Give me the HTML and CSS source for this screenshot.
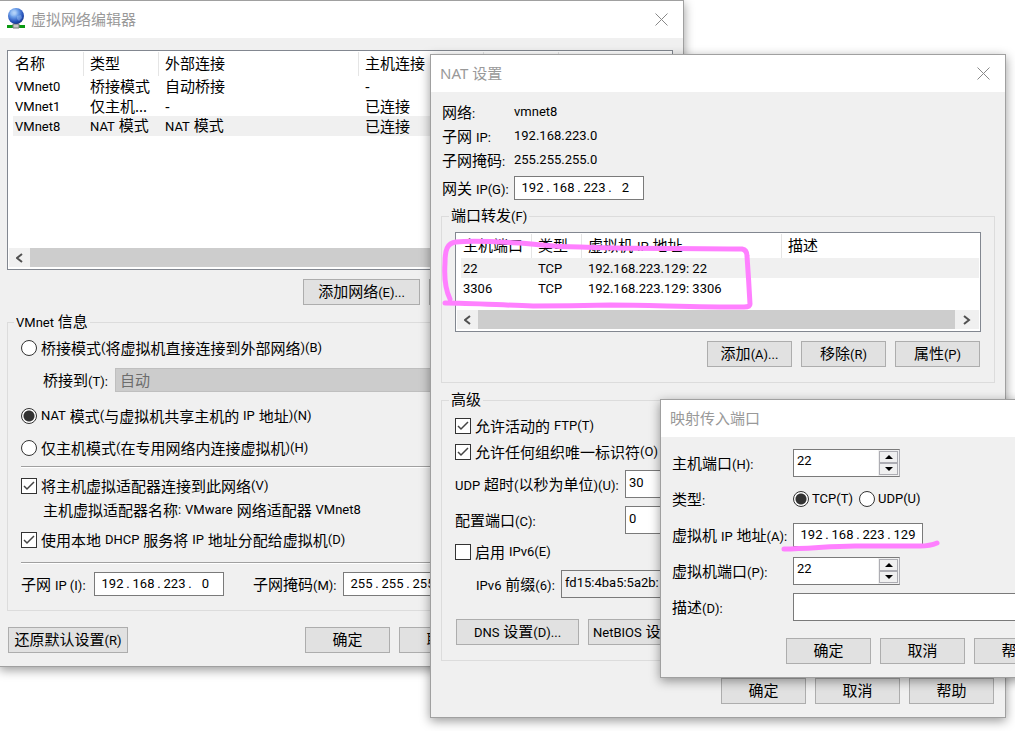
FILE: index.html
```html
<!DOCTYPE html>
<html lang="zh-CN">
<head>
<meta charset="utf-8">
<title>虚拟网络编辑器</title>
<link rel="stylesheet" href="styles.css">
</head>
<body>
<main class="desktop">

<section class="window window-editor">
  <header class="titlebar">
    <svg class="app-icon" width="20" height="22" viewBox="0 0 20 22">
      <defs><radialGradient id="globe" cx=".38" cy=".3" r=".75"><stop offset="0" stop-color="#d4e8ff"/><stop offset=".35" stop-color="#6da0ea"/><stop offset=".75" stop-color="#2450b8"/><stop offset="1" stop-color="#173480"/></radialGradient></defs>
      <path d="M8 15h4v3h-4z" fill="#777"/>
      <path d="M1 17h18v3H1z" fill="#0a9a12"/><path d="M7 16h6v4H7z" fill="#c8c8c8" stroke="#777"/>
      <circle cx="10" cy="8" r="8" fill="url(#globe)"/>
      <path d="M5 3q3-2 5 0l-1 3-3 2-2-2zM11 8l4-1 1 3-3 3-2-2z" fill="#9cc4f4" opacity=".45"/>
    </svg>
    <h1 class="title">虚拟网络编辑器</h1>
    <button class="close" type="button" aria-label="关闭"><svg width="13" height="13" viewBox="0 0 13 13"><path d="M.5.5l12 12M12.5.5l-12 12"/></svg></button>
  </header>
  <div class="editor-body">
    <div class="list networks">
      <table>
        <colgroup><col class="c-first"><col class="c-type"><col class="c-wide"><col class="c-host"><col class="c-type"><col></colgroup>
        <thead><tr><th>名称</th><th>类型</th><th>外部连接</th><th>主机连接</th><th></th><th></th></tr></thead>
        <tbody>
          <tr><td><span class="en">VMnet0</span></td><td>桥接模式</td><td>自动桥接</td><td>-</td><td></td><td></td></tr>
          <tr><td><span class="en">VMnet1</span></td><td>仅主机...</td><td>-</td><td>已连接</td><td></td><td></td></tr>
          <tr class="selected"><td><span class="en">VMnet8</span></td><td><span class="en">NAT</span> 模式</td><td><span class="en">NAT</span> 模式</td><td>已连接</td><td></td><td></td></tr>
        </tbody>
      </table>
      <div class="scrollbar">
        <button class="arrow" type="button" aria-label="向左"><svg width="8" height="10" viewBox="0 0 8 10"><path d="M6 1L1 5l5 4"/></svg></button>
        <div class="thumb"></div>
        <button class="arrow" type="button" aria-label="向右"><svg width="8" height="10" viewBox="0 0 8 10"><path d="M1 1l5 4-5 4"/></svg></button>
      </div>
    </div>
    <div class="actions network-actions">
      <button class="btn add-network" type="button">添加网络<span class="en">(E)...</span></button>
      <button class="btn add-network" type="button"></button>
      <button class="btn add-network" type="button"></button>
    </div>
    <fieldset class="group vmnet">
      <legend><span class="en">VMnet</span> 信息</legend>
      <div class="stack">
        <label class="row"><input type="radio" name="mode">桥接模式<span class="en">(</span>将虚拟机直接连接到外部网络<span class="en">)(B)</span></label>
        <div class="row indent bridge"><label for="bridge">桥接到<span class="en">(T):</span></label><select id="bridge" disabled><option>自动</option></select></div>
      </div>
      <div class="stack modes">
        <label class="row"><input type="radio" name="mode" checked><span class="en">NAT</span>&nbsp;模式<span class="en">(</span>与虚拟机共享主机的&nbsp;<span class="en">IP</span>&nbsp;地址<span class="en">)(N)</span></label>
        <label class="row"><input type="radio" name="mode">仅主机模式<span class="en">(</span>在专用网络内连接虚拟机<span class="en">)(H)</span></label>
      </div>
      <hr>
      <label class="row"><input type="checkbox" checked>将主机虚拟适配器连接到此网络<span class="en">(V)</span></label>
      <p class="row indent">主机虚拟适配器名称<span class="en">:</span>&nbsp;<span class="en">VMware</span>&nbsp;网络适配器&nbsp;<span class="en">VMnet8</span></p>
      <label class="row dhcp"><input type="checkbox" checked>使用本地&nbsp;<span class="en">DHCP</span>&nbsp;服务将&nbsp;<span class="en">IP</span>&nbsp;地址分配给虚拟机<span class="en">(D)</span></label>
      <hr>
      <div class="row subnet">
        <label class="subnet-label" for="ip1">子网&nbsp;<span class="en">IP (I):</span></label>
        <div class="ip"><input id="ip1" value="192"><i>.</i><input aria-label="2" value="168"><i>.</i><input aria-label="3" value="223"><i>.</i><input aria-label="4" value="0"></div>
        <label class="mask-label" for="mask1">子网掩码<span class="en">(M):</span></label>
        <div class="ip"><input id="mask1" value="255"><i>.</i><input aria-label="2" value="255"><i>.</i><input aria-label="3" value="255"><i>.</i><input aria-label="4" value="0"></div>
      </div>
    </fieldset>
    <div class="actions editor-actions">
      <button class="btn restore" type="button">还原默认设置<span class="en">(R)</span></button>
      <button class="btn" type="button">确定</button>
      <button class="btn" type="button">取消</button>
      <button class="btn" type="button"></button>
    </div>
  </div>
</section>

<section class="window window-nat">
  <header class="titlebar">
    <h2 class="title">NAT 设置</h2>
    <button class="close" type="button" aria-label="关闭"><svg width="13" height="13" viewBox="0 0 13 13"><path d="M.5.5l12 12M12.5.5l-12 12"/></svg></button>
  </header>
  <div class="nat-body">
    <div class="facts">
      <span>网络<span class="en">:</span></span><span class="en">vmnet8</span>
      <span>子网 <span class="en">IP:</span></span><span class="en">192.168.223.0</span>
      <span>子网掩码<span class="en">:</span></span><span class="en">255.255.255.0</span>
    </div>
    <div class="facts gateway">
      <label for="gw">网关 <span class="en">IP(G):</span></label>
      <div class="ip"><input id="gw" value="192"><i>.</i><input aria-label="2" value="168"><i>.</i><input aria-label="3" value="223"><i>.</i><input aria-label="4" value="2"></div>
    </div>
    <fieldset class="group forwarding">
      <legend>端口转发<span class="en">(F)</span></legend>
      <div class="list">
        <table>
          <colgroup><col class="c-first"><col class="c-proto"><col class="c-wide"><col></colgroup>
          <thead><tr><th>主机端口</th><th>类型</th><th>虚拟机 <span class="en">IP</span> 地址</th><th>描述</th></tr></thead>
          <tbody>
            <tr class="selected"><td><span class="en">22</span></td><td><span class="en">TCP</span></td><td><span class="en">192.168.223.129: 22</span></td><td></td></tr>
            <tr><td><span class="en">3306</span></td><td><span class="en">TCP</span></td><td><span class="en">192.168.223.129: 3306</span></td><td></td></tr>
          </tbody>
        </table>
        <div class="scrollbar">
          <button class="arrow" type="button" aria-label="向左"><svg width="8" height="10" viewBox="0 0 8 10"><path d="M6 1L1 5l5 4"/></svg></button>
          <div class="thumb"></div>
          <button class="arrow" type="button" aria-label="向右"><svg width="8" height="10" viewBox="0 0 8 10"><path d="M1 1l5 4-5 4"/></svg></button>
        </div>
      </div>
      <div class="actions forward-actions">
        <button class="btn" type="button">添加<span class="en">(A)...</span></button>
        <button class="btn" type="button">移除<span class="en">(R)</span></button>
        <button class="btn" type="button">属性<span class="en">(P)</span></button>
      </div>
    </fieldset>
    <fieldset class="group advanced">
      <legend>高级</legend>
      <label class="row"><input type="checkbox" checked>允许活动的&nbsp;<span class="en">FTP(T)</span></label>
      <label class="row oui"><input type="checkbox" checked>允许任何组织唯一标识符<span class="en">(O)</span></label>
      <div class="pair">
        <label for="udp"><span class="en">UDP</span> 超时<span class="en">(</span>以秒为单位<span class="en">)(U):</span></label><input class="field short" id="udp" value="30">
        <label for="cfg">配置端口<span class="en">(C):</span></label><input class="field short" id="cfg" value="0">
      </div>
      <label class="row ipv6"><input type="checkbox">启用&nbsp;<span class="en">IPv6(E)</span></label>
      <div class="prefix"><label for="pre"><span class="en">IPv6</span> 前缀<span class="en">(6):</span></label><input class="field" id="pre" value="fd15:4ba5:5a2b:" disabled></div>
      <div class="actions advanced-actions">
        <button class="btn" type="button"><span class="en">DNS</span> 设置<span class="en">(D)...</span></button>
        <button class="btn netbios" type="button"><span class="en">NetBIOS</span> 设置</button>
      </div>
    </fieldset>
    <div class="actions nat-actions">
      <button class="btn" type="button">确定</button>
      <button class="btn" type="button">取消</button>
      <button class="btn" type="button">帮助</button>
    </div>
  </div>
</section>

<section class="window window-map">
  <header class="titlebar"><h2 class="title">映射传入端口</h2></header>
  <div class="map-body">
    <div class="form">
      <label for="hp">主机端口<span class="en">(H):</span></label>
      <div class="spin"><input id="hp" value="22"><div class="steps"><button type="button" aria-label="增加"><svg width="8" height="4" viewBox="0 0 8 4"><path d="M0 4l4-4 4 4z"/></svg></button><button type="button" aria-label="减少"><svg width="8" height="4" viewBox="0 0 8 4"><path d="M0 0l4 4 4-4z"/></svg></button></div></div>
      <span>类型<span class="en">:</span></span>
      <div class="choices"><label class="row"><input type="radio" name="proto" checked><span class="en">TCP(T)</span></label><label class="row"><input type="radio" name="proto"><span class="en">UDP(U)</span></label></div>
      <label for="vmip">虚拟机 <span class="en">IP</span> 地址<span class="en">(A):</span></label>
      <div class="ip"><input id="vmip" value="192"><i>.</i><input aria-label="2" value="168"><i>.</i><input aria-label="3" value="223"><i>.</i><input aria-label="4" value="129"></div>
      <label for="vp">虚拟机端口<span class="en">(P):</span></label>
      <div class="spin"><input id="vp" value="22"><div class="steps"><button type="button" aria-label="增加"><svg width="8" height="4" viewBox="0 0 8 4"><path d="M0 4l4-4 4 4z"/></svg></button><button type="button" aria-label="减少"><svg width="8" height="4" viewBox="0 0 8 4"><path d="M0 0l4 4 4-4z"/></svg></button></div></div>
      <label for="desc">描述<span class="en">(D):</span></label>
      <input class="field" id="desc">
    </div>
    <div class="actions map-actions">
      <button class="btn" type="button">确定</button>
      <button class="btn" type="button">取消</button>
      <button class="btn" type="button">帮助</button>
    </div>
  </div>
</section>

<svg class="ink" width="1015" height="731" viewBox="0 0 1015 731" aria-hidden="true">
  <path d="M450 299C446 291 444 278 445 263C445 250 447 243 456 242C475 240 500 242 520 243C545 245 550 247 580 247C620 249 680 248 742 249Q747 250 747 256C748 270 749 285 750 304Q750 307 744 307C690 307 650 305 610 305C570 306 550 306 533 306C500 305 470 303 445 303"/>
  <path d="M784 549C808 549 830 546 855 546C880 546 900 546 920 546Q930 546 937 543"/>
</svg>
</main>
</body>
</html>
```

FILE: styles.css
```css
* { box-sizing: border-box; }
body {
  margin: 0;
  background: #fff;
  color: #000;
  font-family: "Noto Sans", "Noto Sans CJK SC", sans-serif;
  font-size: 15px;
  line-height: 20px;
}
button, input, select { font: inherit; color: inherit; margin: 0; }
p, h1, h2 { margin: 0; }
.en { font-family: Roboto, "Noto Sans", sans-serif; font-size: 13px; line-height: 16px; white-space: pre; }

.desktop { position: relative; min-height: 100vh; overflow: hidden; }
.window {
  position: absolute;
  background: #f0f0f0;
  border: 1px solid #a0a0a0;
  box-shadow: 0 3px 10px rgba(0, 0, 0, .4);
  white-space: nowrap;
}
.window-editor { left: -1px; top: 0; width: 685px; }
.window-nat { left: 430px; top: 54px; width: 576px; }
.window-map { left: 660px; top: 399px; width: 411px; }

.titlebar {
  display: flex;
  align-items: center;
  height: 37px;
  padding: 0 15px 1px 9px;
  background: #fff;
}
.window-editor .titlebar { padding-left: 6px; }
.app-icon { margin-right: 5px; }
.title { flex: 1; font-size: 15px; font-weight: 400; color: #999; }
.close { display: flex; padding: 0; border: 0; background: none; }
.close svg { fill: none; stroke: #888; }

/* list views */
.list {
  display: flex;
  flex-direction: column;
  padding: 1px;
  border: 1px solid #828790;
  background: #fff;
}
.list table {
  table-layout: fixed;
  width: calc(100% - 4px);
  margin-left: 4px;
  border-collapse: separate;
  border-spacing: 0;
}
.list th, .list td { padding: 0 0 0 6px; height: 20px; text-align: left; font-weight: 400; line-height: 18px; }
.list th { height: 24px; padding-bottom: 2px; border-right: 1px solid #e5e5e5; }
.list td { padding-bottom: 1px; }
.list th:last-child { border-right: 0; }
.list th:first-child, .list td:first-child { padding-left: 2px; }
.selected { background: #f0f0f0; }
.c-first { width: 71px; }
.c-type { width: 75px; }
.c-proto { width: 50px; }
.c-wide { width: 200px; }
.c-host { width: 125px; }
.scrollbar { display: flex; height: 20px; margin-top: 12px; background: #f0f0f0; border-bottom: 1px solid #fff; }
.arrow { display: flex; align-items: center; justify-content: center; width: 21px; padding: 0; border: 0; background: none; }
.arrow:last-child { width: 24px; }
.arrow svg { fill: none; stroke: #505050; stroke-width: 2; }
.thumb { flex: 1; background: #cdcdcd; }

/* buttons */
.actions { display: flex; gap: 9px; }
.btn {
  min-width: 85px;
  height: 26px;
  padding: 0 4px 2px;
  border: 1px solid #adadad;
  background: #e1e1e1;
  line-height: 20px;
}

/* groups and rows */
.group { min-width: 0; margin: 0; border: 1px solid #dcdcdc; }
.group legend { height: 20px; padding: 0 2px; line-height: 18px; }
.row { display: flex; align-items: center; min-height: 24px; }
.row input[type="radio"], .row input[type="checkbox"] {
  appearance: none;
  flex: none;
  width: 16px;
  height: 16px;
  margin-right: 4px;
  border: 1px solid #333;
  background: #fff;
}
.row input[type="radio"] { border-radius: 50%; }
.row input[type="radio"]:checked { background: radial-gradient(circle, #333 0 5px, #fff 6px); }
.row input[type="checkbox"]:checked {
  background: #fff url("data:image/svg+xml,%3Csvg xmlns='http://www.w3.org/2000/svg' viewBox='0 0 14 14'%3E%3Cpath d='M2 7l3 3 7-7' fill='none' stroke='%23444' stroke-width='1.5'/%3E%3C/svg%3E");
}
hr { margin: 0; border: 0; border-top: 1px solid #a0a0a0; border-bottom: 1px solid #fff; }

.ip { display: flex; align-items: center; width: 130px; height: 24px; padding: 0 5px; border: 1px solid #7a7a7a; background: #fff; font-family: Roboto, sans-serif; font-size: 13px; }
.ip input { width: 25px; padding: 0; border: 0; background: none; text-align: center; }
.ip i { width: 6px; font-style: normal; text-align: center; }
.field { height: 28px; padding: 0 3px 4px; border: 1px solid #7a7a7a; background: #fff; font-family: Roboto, sans-serif; font-size: 13px; }
.field:disabled { background: #f0f0f0; color: #000; border-color: #7a7a7a; }

/* network editor */
.editor-body { padding: 12px 10px 13px 7px; }
.networks { height: 220px; }
.networks .scrollbar { margin-top: auto; }
.network-actions { margin: 9px 0 7px; padding-left: 296px; }
.add-network { width: 117px; }
.vmnet { padding: 4px 13px 14px; }
.vmnet legend { margin-left: -7px; }
.stack { display: grid; gap: 8px; }
.modes { margin: 12px 0 6px; }
.indent { padding-left: 22px; }
.bridge { gap: 7px; }
.bridge select { appearance: none; flex: 1; height: 24px; padding: 0 4px; border: 1px solid #bfbfbf; background: #ccc; color: #6d6d6d; opacity: 1; }
.vmnet hr + .row { margin-top: 6px; }
.vmnet .dhcp { margin: 6px 0 10px; }
.vmnet hr + .subnet { margin-top: 8px; }
.subnet-label { width: 73px; }
.mask-label { width: 90px; margin-left: 29px; }
.editor-actions { margin-top: 16px; padding-left: 1px; }
.restore { width: 120px; margin-right: 168px; }

/* NAT settings */
.nat-body { padding: 8px 10px 13px; }
.facts { display: grid; grid-template-columns: 72px 1fr; grid-auto-rows: 24px; align-items: center; padding-left: 1px; }
.gateway { margin: 4px 0 6px; }
.forwarding { padding: 6px 13px 15px; }
.forwarding legend, .advanced legend { margin-left: -6px; }
.forward-actions { justify-content: flex-end; margin-top: 9px; padding-right: 1px; }
.advanced { margin-top: 7px; padding: 4px 13px 15px; }
.advanced .oui { margin: 2px 0 6px; }
.pair { display: grid; grid-template-columns: 170px 140px; row-gap: 8px; align-items: center; }
.ipv6 { margin: 6px 0; }
.prefix { display: flex; align-items: center; padding-left: 21px; gap: 5px; }
.prefix .field { width: 300px; }
.prefix label { width: 80px; }
.advanced-actions { margin-top: 21px; padding-left: 1px; }
.advanced-actions .btn { width: 123px; }
.advanced-actions .netbios { text-align: left; }
.nat-actions { justify-content: flex-end; margin: 17px 1px 0 0; }

/* port mapping */
.map-body { padding: 12px 11px 13px; }
.form { display: grid; grid-template-columns: 121px 1fr; grid-auto-rows: 28px; row-gap: 8px; align-items: center; }
.spin { display: flex; width: 107px; height: 28px; border: 1px solid #7a7a7a; border-right-color: #adadb3; background: #fff; }
.spin > input { flex: 1; min-width: 0; padding: 0 3px 4px; border: 0; background: none; font-family: Roboto, sans-serif; font-size: 13px; }
.steps { display: grid; width: 21px; padding: 1px; background: #f0f0f0; }
.steps button { display: flex; align-items: center; justify-content: center; min-height: 0; padding: 0; border: 1px solid #adadb3; background: #f0f0f0; }
.choices { display: flex; gap: 6px; }
.choices .row input { margin-right: 3px; }
.map-actions { justify-content: flex-end; margin-top: 17px; }

.ink { position: absolute; left: 0; top: 0; pointer-events: none; fill: none; stroke: #ff80ff; stroke-width: 5; stroke-linecap: round; stroke-linejoin: round; }
```
